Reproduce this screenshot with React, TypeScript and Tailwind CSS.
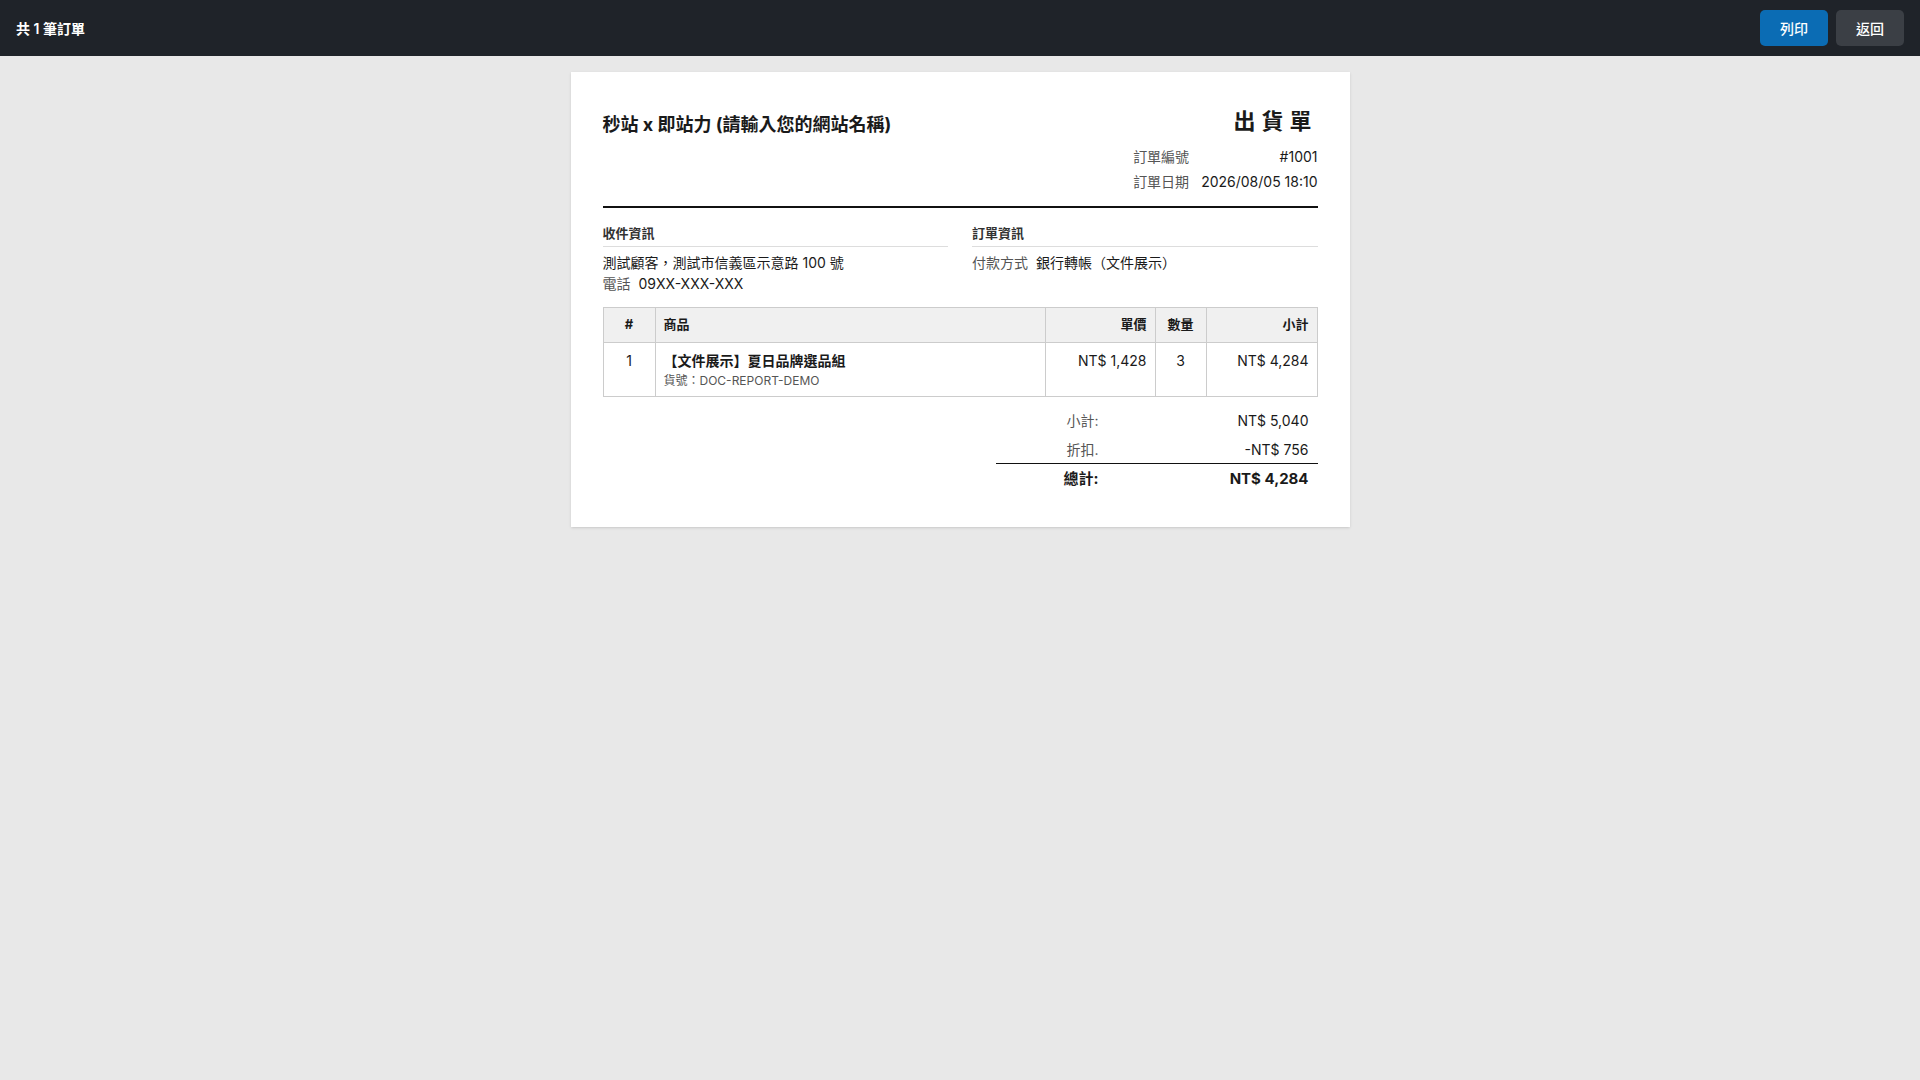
const font = { fontFamily: 'Inter, "Noto Sans CJK TC", "Noto Sans", sans-serif' };

const items = [
  { no: 1, name: '【文件展示】夏日品牌選品組', sku: 'DOC-REPORT-DEMO', price: 'NT$ 1,428', qty: 3, total: 'NT$ 4,284' },
];

export default function App() {
  return (
    <div className="min-h-screen bg-[#e8e8e8] text-[#1a1a1a]" style={font}>
      {/* Toolbar */}
      <div className="h-[56px] bg-[#1f2329] flex items-center justify-between pl-4 pr-4">
        <div className="text-white text-[14px] font-semibold">共 1 筆訂單</div>
        <div className="flex items-center gap-2">
          <button className="h-9 w-[68px] rounded-[5px] bg-[#0b6cb4] text-white text-[14px] font-medium">列印</button>
          <button className="h-9 w-[68px] rounded-[5px] bg-[#3b3f45] text-white text-[14px] font-medium">返回</button>
        </div>
      </div>

      <div className="flex justify-center pt-4">
        <div className="w-[779px] bg-white shadow-sm px-8 pt-8 pb-8">
          {/* Header */}
          <div className="flex justify-between border-b-2 border-[#111] pb-3">
            <div className="pt-[9px] text-[18px] leading-[24px] font-bold">秒站 x 即站力 (請輸入您的網站名稱)</div>
            <div className="flex flex-col items-end">
              <div className="text-[22px] leading-[34px] font-bold tracking-[6px]">出貨單</div>
              <table className="mt-[6px] text-[14px]">
                <tbody>
                  <tr className="h-[25px]">
                    <td className="text-[#555] pr-3">訂單編號</td>
                    <td className="text-right">#1001</td>
                  </tr>
                  <tr className="h-[25px]">
                    <td className="text-[#555] pr-3">訂單日期</td>
                    <td className="text-right">2026/08/05 18:10</td>
                  </tr>
                </tbody>
              </table>
            </div>
          </div>

          {/* Info blocks */}
          <div className="grid grid-cols-2 gap-6 mt-4">
            <div>
              <div className="text-[13px] leading-[18px] font-bold text-[#333] pb-1 border-b border-[#ddd]">收件資訊</div>
              <div className="mt-[5px] text-[14px] leading-[21px]">
                <div>測試顧客，測試市信義區示意路 100 號</div>
                <div><span className="text-[#555] mr-2">電話</span>09XX-XXX-XXX</div>
              </div>
            </div>
            <div>
              <div className="text-[13px] leading-[18px] font-bold text-[#333] pb-1 border-b border-[#ddd]">訂單資訊</div>
              <div className="mt-[5px] text-[14px] leading-[21px]">
                <div><span className="text-[#555] mr-2">付款方式</span>銀行轉帳（文件展示）</div>
              </div>
            </div>
          </div>

          {/* Items */}
          <table className="w-full mt-[13px] border-collapse text-[14px]">
            <thead>
              <tr className="bg-[#f0f0f0] h-[35px] text-[13px]">
                <th className="w-[52px] border border-[#ccc] font-bold text-center">#</th>
                <th className="border border-[#ccc] font-bold text-left px-2">商品</th>
                <th className="w-[110px] border border-[#ccc] font-bold text-right px-2">單價</th>
                <th className="w-[51px] border border-[#ccc] font-bold text-center">數量</th>
                <th className="w-[111px] border border-[#ccc] font-bold text-right px-2">小計</th>
              </tr>
            </thead>
            <tbody>
              {items.map(it => (
                <tr key={it.no} className="align-top">
                  <td className="border border-[#ccc] text-center pt-2 leading-[20px]">{it.no}</td>
                  <td className="border border-[#ccc] px-2 pt-2 pb-[5px]">
                    <div className="font-bold leading-[20px]">{it.name}</div>
                    <div className="text-[12px] leading-[20px] text-[#555]">貨號：{it.sku}</div>
                  </td>
                  <td className="border border-[#ccc] text-right px-2 pt-2 leading-[20px]">{it.price}</td>
                  <td className="border border-[#ccc] text-center pt-2 leading-[20px]">{it.qty}</td>
                  <td className="border border-[#ccc] text-right px-2 pt-2 leading-[20px]">{it.total}</td>
                </tr>
              ))}
            </tbody>
          </table>

          {/* Totals */}
          <div className="flex justify-end mt-[8px]">
            <div className="w-[322px] text-[14px]">
              <div className="grid grid-cols-[111px_1fr] h-[30px] items-center">
                <div className="text-right pr-2 text-[#555]">小計:</div>
                <div className="text-right pr-[9px]">NT$ 5,040</div>
              </div>
              <div className="grid grid-cols-[111px_1fr] h-[29px] items-center border-b border-[#111]">
                <div className="text-right pr-2 text-[#555]">折扣.</div>
                <div className="text-right pr-[9px]">-NT$ 756</div>
              </div>
              <div className="grid grid-cols-[111px_1fr] h-[31px] items-center font-bold text-[15px]">
                <div className="text-right pr-2">總計:</div>
                <div className="text-right pr-[9px]">NT$ 4,284</div>
              </div>
            </div>
          </div>
        </div>
      </div>
    </div>
  );
}
